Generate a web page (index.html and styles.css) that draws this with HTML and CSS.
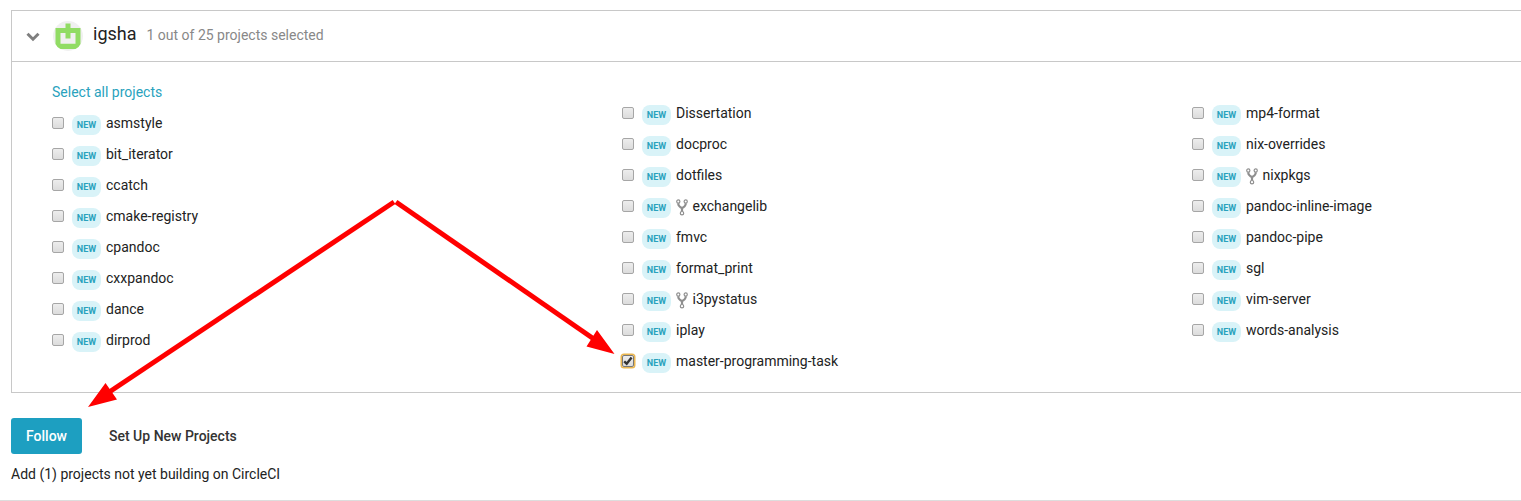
FILE: index.html
```html
<!DOCTYPE html>
<html lang="en">
<head>
<meta charset="utf-8">
<title>Add Projects</title>
<link rel="stylesheet" href="styles.css">
</head>
<body>
<svg class="defs" width="0" height="0">
  <symbol id="fork" viewBox="0 0 12 17">
    <g fill="none" stroke="#8f8f8f">
      <circle cx="2.3" cy="2.5" r="1.6" stroke-width="1.2"/>
      <circle cx="9.7" cy="2.5" r="1.6" stroke-width="1.2"/>
      <circle cx="6" cy="14.2" r="1.7" stroke-width="1.2"/>
      <path d="M2.4 4.3v1.4Q2.6 7.2 6 9.3Q9.4 7.2 9.6 5.7V4.3M6 8.8v3.6" stroke-width="2.2"/>
    </g>
  </symbol>
</svg>
<main class="page">
  <section class="panel">
    <header class="panel-head">
      <svg class="chevron" width="14" height="10" viewBox="0 0 14 10"><path d="M1.5 1.8L7 7.2L12.5 1.8" fill="none" stroke="#7f7f7f" stroke-width="3"/></svg>
      <svg class="avatar" width="30" height="30" viewBox="0 0 30 30">
        <circle cx="15" cy="15" r="15" fill="#f0f0f0"/>
        <path d="M2.5 7H12.5V2.5H17.5V7H27.5V23Q26 26.5 22.5 28H7.5Q4 26.5 2.5 23ZM7.5 12V22.7H22.5V12H17.5V17.5H12.5V12Z" fill="#91dc64" fill-rule="evenodd"/>
      </svg>
      <span class="org">igsha</span>
      <span class="count">1 out of 25 projects selected</span>
    </header>
    <div class="columns">
      <div class="column first">
        <a class="select-all">Select all projects</a>
        <label class="row"><i class="box"></i><span class="badge">NEW</span><span>asmstyle</span></label>
        <label class="row"><i class="box"></i><span class="badge">NEW</span><span>bit_iterator</span></label>
        <label class="row"><i class="box"></i><span class="badge">NEW</span><span>ccatch</span></label>
        <label class="row"><i class="box"></i><span class="badge">NEW</span><span>cmake-registry</span></label>
        <label class="row"><i class="box"></i><span class="badge">NEW</span><span>cpandoc</span></label>
        <label class="row"><i class="box"></i><span class="badge">NEW</span><span>cxxpandoc</span></label>
        <label class="row"><i class="box"></i><span class="badge">NEW</span><span>dance</span></label>
        <label class="row"><i class="box"></i><span class="badge">NEW</span><span>dirprod</span></label>
      </div>
      <div class="column">
        <label class="row"><i class="box"></i><span class="badge">NEW</span><span>Dissertation</span></label>
        <label class="row"><i class="box"></i><span class="badge">NEW</span><span>docproc</span></label>
        <label class="row"><i class="box"></i><span class="badge">NEW</span><span>dotfiles</span></label>
        <label class="row"><i class="box"></i><span class="badge">NEW</span><svg class="fork"><use href="#fork"/></svg><span>exchangelib</span></label>
        <label class="row"><i class="box"></i><span class="badge">NEW</span><span>fmvc</span></label>
        <label class="row"><i class="box"></i><span class="badge">NEW</span><span>format_print</span></label>
        <label class="row"><i class="box"></i><span class="badge">NEW</span><svg class="fork"><use href="#fork"/></svg><span>i3pystatus</span></label>
        <label class="row"><i class="box"></i><span class="badge">NEW</span><span>iplay</span></label>
        <label class="row"><i class="box checked"><svg width="10" height="10" viewBox="0 0 10 10"><path d="M1.2 5.4L3.7 7.7L8.6 1.6" fill="none" stroke="#333" stroke-width="2.4"/></svg></i><span class="badge">NEW</span><span>master-programming-task</span></label>
      </div>
      <div class="column">
        <label class="row"><i class="box"></i><span class="badge">NEW</span><span>mp4-format</span></label>
        <label class="row"><i class="box"></i><span class="badge">NEW</span><span>nix-overrides</span></label>
        <label class="row"><i class="box"></i><span class="badge">NEW</span><svg class="fork"><use href="#fork"/></svg><span>nixpkgs</span></label>
        <label class="row"><i class="box"></i><span class="badge">NEW</span><span>pandoc-inline-image</span></label>
        <label class="row"><i class="box"></i><span class="badge">NEW</span><span>pandoc-pipe</span></label>
        <label class="row"><i class="box"></i><span class="badge">NEW</span><span>sgl</span></label>
        <label class="row"><i class="box"></i><span class="badge">NEW</span><span>vim-server</span></label>
        <label class="row"><i class="box"></i><span class="badge">NEW</span><span>words-analysis</span></label>
      </div>
    </div>
  </section>
  <div class="actions">
    <button class="follow">Follow</button>
    <a class="setup">Set Up New Projects</a>
  </div>
  <p class="note">Add (1) projects not yet building on CircleCI</p>
</main>
<svg class="arrows" width="1521" height="501" viewBox="0 0 1521 501">
  <g stroke="#f00" stroke-width="5"><path d="M394 202L107 393.5"/><path d="M396 202L596 340.5"/></g>
  <path d="M88 407L105.5 383L117 399.5ZM614.5 354L597 330L586.500 346.500Z" fill="#f00"/>
</svg>
</body>
</html>
```
FILE: styles.css
```css
* { box-sizing: border-box; }
body { margin: 0; background: #fff; color: #222; font: 14px/20px Roboto, sans-serif; overflow: hidden; }
.defs { position: absolute; }
.page { height: 501px; padding: 10px 0 0 11px; border-bottom: 1px solid #ddd; overflow: hidden; }
.panel { height: 383px; border: 1px solid #c8c8c8; border-right: 0; }
.panel-head { display: flex; align-items: center; height: 51px; padding-left: 14px; border-bottom: 1px solid #c8c8c8; }
.chevron { margin: 2px 13px 0 0; }
.avatar { margin: 0 10px 0 0; }
.chevron, .avatar, .org, .count { flex: none; }
.org { margin: -4px 10px 0 0; font-size: 18px; }
.count { color: #888; margin-top: -2px; }
.columns { display: flex; padding: 36px 0 0 40px; }
.column { flex: 0 0 570px; }
.first { margin-top: -21px; }
.select-all { display: block; color: #29a2bd; line-height: 31px; }
.row { display: flex; align-items: center; height: 31px; padding-bottom: 2px; white-space: nowrap; }
.box { flex: none; display: flex; align-items: center; justify-content: center; width: 12px; height: 12px; margin-right: 8px; border: 1px solid #a6a6a6; border-radius: 2px; background: linear-gradient(#ededed, #dcdcdc); }
.checked { border-color: #777; box-shadow: 0 0 0 1.5px #eab64f; }
.checked svg { flex: none; }
.badge { height: 20px; width: 29px; margin: 5px 5px 0 0; border-radius: 8px; background: #d9f3f8; color: #29a2bd; font-size: 9px; font-weight: 700; line-height: 20px; text-align: center; }
.fork { width: 12px; height: 17px; margin: 3px 4.500px 0 0; }
.actions { display: flex; align-items: center; margin-top: 25px; }
.follow { width: 71px; height: 36px; padding: 0; border: 0; border-radius: 3px; background: #1d9fc1; color: #fff; font: 500 14px/36px Roboto, sans-serif; }
.setup { margin-left: 27px; font-weight: 500; color: #333; }
.note { margin: 10px 0 0; }
.arrows { position: absolute; left: 0; top: 0; pointer-events: none; }
```
